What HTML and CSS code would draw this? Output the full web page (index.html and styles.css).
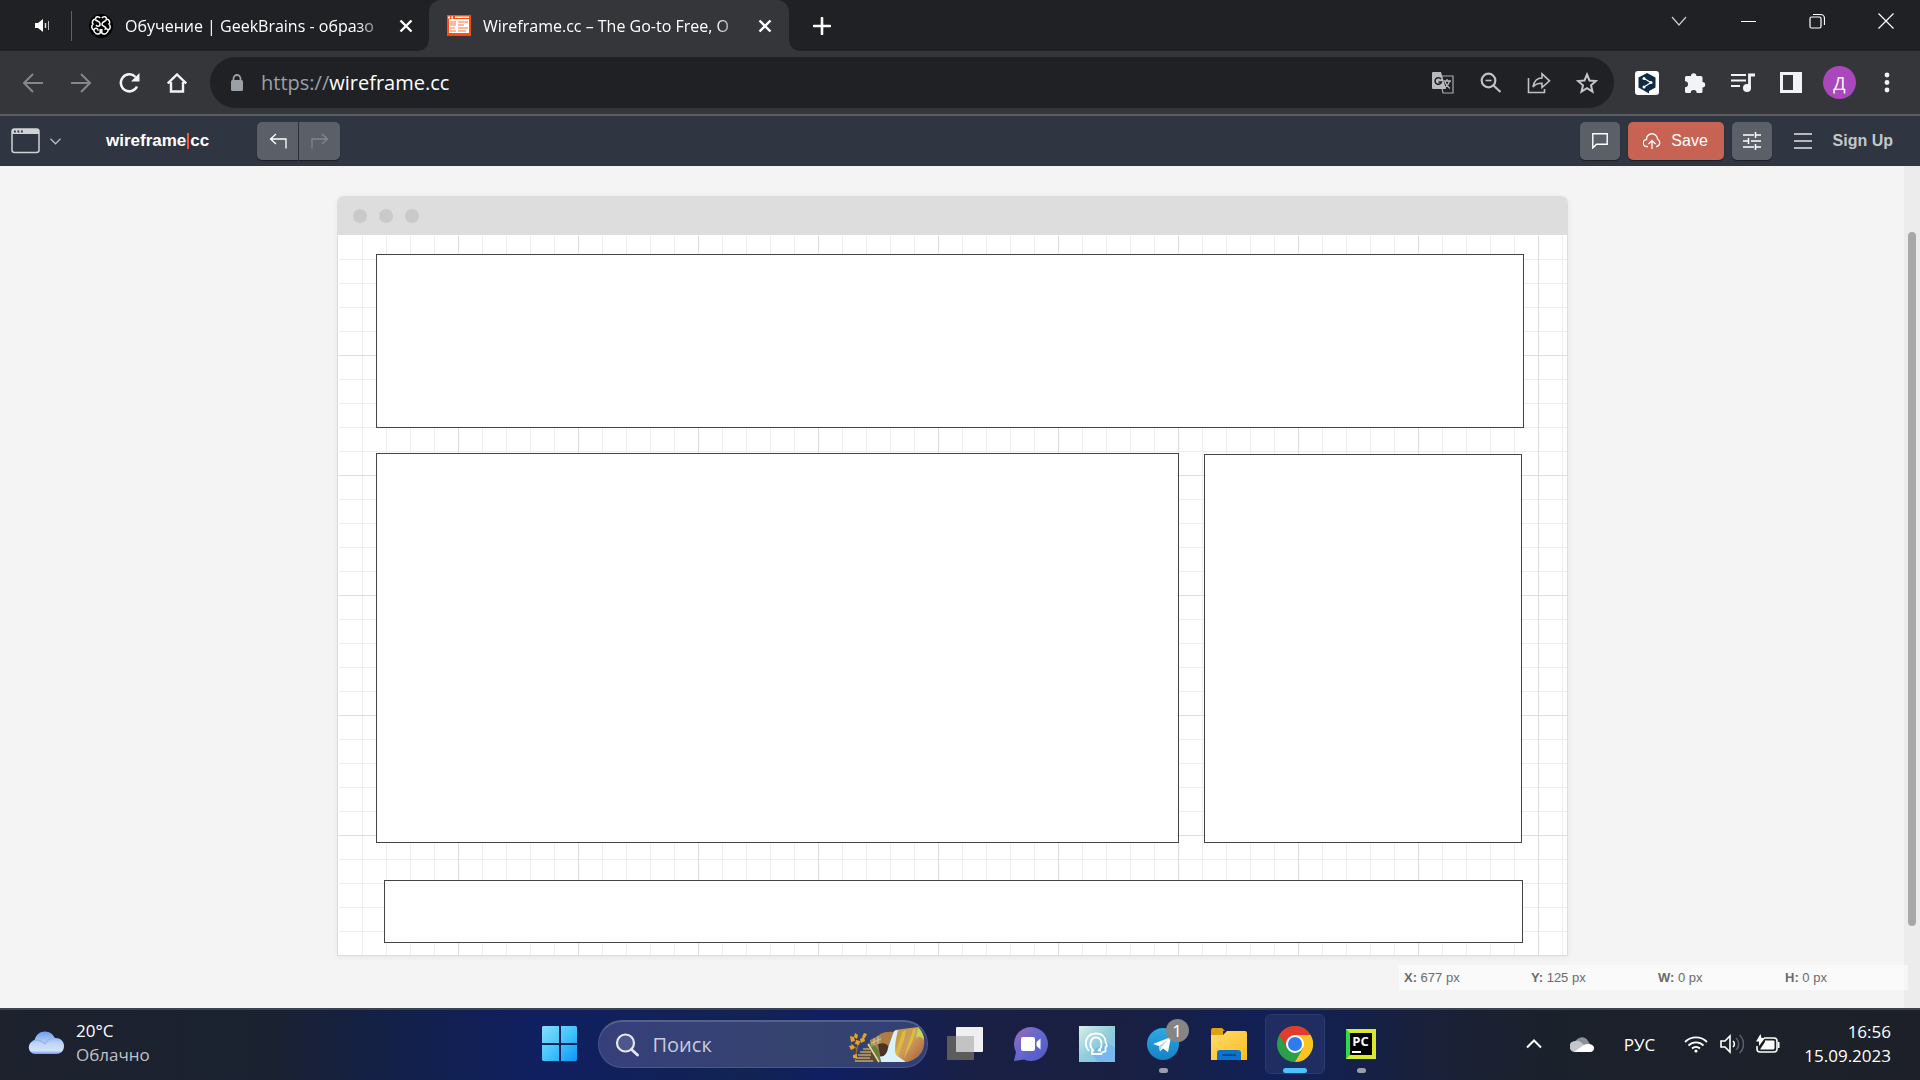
FILE: index.html
```html
<!DOCTYPE html>
<html lang="ru">
<head>
<meta charset="utf-8">
<title>Wireframe.cc – The Go-to Free, O</title>
<meta name="viewport" content="width=device-width, initial-scale=1">
<link rel="stylesheet" href="styles.css">
</head>
<body>
<div class="desktop">
  <header class="tabstrip">
    <button class="tab-sound" type="button" aria-label="Звук">
      <svg width="16" height="16" viewBox="0 0 16 16"><path d="M0 5h3l5-4v13l-5-4H0z" fill="#fff"/><path d="M10.500 5v5" stroke="#ddd" stroke-width="1.500"/><path d="M13.500 3v9" stroke="#bbb" stroke-width="1"/></svg>
    </button>
    <a class="tab" href="#geekbrains">
      <svg width="24" height="24" viewBox="0 0 24 24"><circle cx="12" cy="12" r="12" fill="#000"/><g fill="none" stroke="#fff" stroke-width="1.500"><path d="M11.200 4C9 1.500 6.500 3 6.500 5 3.500 5.500 2.500 8.500 4 10c-2 2-1.500 5 .8 6 0 3 4.200 5.500 6.400 3V15"/><path d="M12.800 4c2.200-2.500 4.700-1 4.700 1 3 .5 4 3.500 2.500 5 2 2 1.500 5-.8 6 0 3-4.200 5.500-6.400 3v-4"/><path d="M6.500 5.500c.5 2 4 1 4.500 4s-2.500 3.500-4 1.500M17.500 5.500c-1 2.500-4 1.500-4.500 4.500s4 1.500 4 4.500M5 16c1-3 4-2 4 .8M19 16c-1-2-2.500-1.500-3.500-.5"/></g></svg>
      <span class="tab-title">Обучение | GeekBrains - образо</span>
      <svg class="tab-close" width="14" height="14" viewBox="0 0 14 14"><path d="M1.500 1.500l11 11M12.500 1.500l-11 11" stroke="#fff" stroke-width="2.400"/></svg>
    </a>
    <a class="tab tab-active" href="#wireframe">
      <svg width="24" height="24" viewBox="0 0 24 24"><rect y="2" width="24" height="20" fill="#777"/><rect y="1" width="24" height="20" fill="#ff4c0a"/><path d="M2 5h20v14H2zM1 2.500h2v2H1zM4 2.500h2v2H4zM8 2.500h14v1.500H8z" fill="#fff"/><path d="M3 7h6v5H3zM11 7h10v2H11zM11 10h6v2h-6zM3 13h5v2H3zM11 13h10v2H11zM3 16h6v2H3zM11 16h8v2h-8z" fill="#ffb899"/></svg>
      <span class="tab-title">Wireframe.cc – The Go-to Free, O</span>
      <svg class="tab-close" width="14" height="14" viewBox="0 0 14 14"><path d="M1.500 1.500l11 11M12.500 1.500l-11 11" stroke="#fff" stroke-width="2.400"/></svg>
    </a>
    <button class="new-tab" type="button" aria-label="Новая вкладка"><svg width="18" height="18" viewBox="0 0 18 18"><path d="M9 1v16M1 9h16" stroke="#fff" stroke-width="2.600" stroke-linecap="round"/></svg></button>
    <div class="window-controls">
      <button type="button" aria-label="Поиск вкладок"><svg width="16" height="16" viewBox="0 0 16 16" fill="none" stroke="#ccc" stroke-width="1.200"><path d="M1 4l7 8 7-8"/></svg></button>
      <button type="button" aria-label="Свернуть"><svg width="16" height="16" viewBox="0 0 16 16"><path d="M1 8.500h15" stroke="#fff"/></svg></button>
      <button type="button" aria-label="Свернуть в окно"><svg width="16" height="16" viewBox="0 0 16 16" fill="none" stroke="#fff" stroke-width="1.200"><rect x="1" y="4" width="11" height="11" rx="1.500"/><path d="M4 1.500h7.500a4 4 0 0 1 4 4V12"/></svg></button>
      <button type="button" aria-label="Закрыть"><svg width="16" height="16" viewBox="0 0 16 16"><path d="M.5.500l15 15M15.500.500l-15 15" stroke="#fff" stroke-width="1.200"/></svg></button>
    </div>
  </header>

  <nav class="toolbar">
    <button class="tool" type="button" aria-label="Назад"><svg width="20" height="20" viewBox="0 0 20 20" fill="none" stroke="#85868a" stroke-width="2"><path d="M20 10H1.500M10 1l-9 9 9 9"/></svg></button>
    <button class="tool" type="button" aria-label="Вперёд"><svg width="20" height="20" viewBox="0 0 20 20" fill="none" stroke="#85868a" stroke-width="2"><path d="M0 10h18.500M10 1l9 9-9 9"/></svg></button>
    <button class="tool" type="button" aria-label="Обновить"><svg width="22" height="22" viewBox="0 0 22 22"><path d="M19 14.500A8.500 8.500 0 1 1 17.500 5" fill="none" stroke="#f1f3f4" stroke-width="2.500"/><path d="M21.500 1v8.500H13z" fill="#f1f3f4"/></svg></button>
    <button class="tool" type="button" aria-label="Главная"><svg width="20" height="20" viewBox="0 0 20 20"><path d="M.8 10.500L10 1.500l9.200 9M4 9v9.500h12V9" fill="none" stroke="#f1f3f4" stroke-width="2.400"/></svg></button>
    <div class="omnibox">
      <svg class="lock" width="12" height="18" viewBox="0 0 12 18"><rect y="6" width="12" height="11" rx="1.500" fill="#9aa0a6"/><path d="M2.500 7V4.500a3.500 3.500 0 0 1 7 0V7" fill="none" stroke="#9aa0a6" stroke-width="1.800"/></svg>
      <a class="url" href="#wireframe"><span class="scheme">https://</span>wireframe.cc</a>
      <button class="tool" type="button" aria-label="Перевести"><svg width="22" height="22" viewBox="0 0 22 22"><path d="M7 4h14v17H11z" fill="none" stroke="#aaabad" stroke-width="1.200"/><path d="M1 0h8l5 17H1a1 1 0 0 1-1-1V1a1 1 0 0 1 1-1z" fill="#b9babc"/><path d="M9 7A3.300 3.300 0 1 0 9.500 10H6.500" fill="none" stroke="#202124" stroke-width="1.500"/><path d="M11.500 9h7.500M15 7v2M17.500 9c-.5 3-2.500 5-4.500 6.500M13 10c1 3 3 5 5 6.500" stroke="#b9babc" stroke-width="1.300" fill="none"/></svg></button>
      <button class="tool" type="button" aria-label="Масштаб"><svg width="22" height="22" viewBox="0 0 22 22" fill="none" stroke="#bdc1c6" stroke-width="2.200"><circle cx="8.500" cy="8.500" r="6.800"/><path d="M13.500 13.500l7 6.500"/><path d="M5.500 8.500h6" stroke-width="1.600"/></svg></button>
      <button class="tool" type="button" aria-label="Поделиться"><svg width="24" height="22" viewBox="0 0 24 22" fill="none" stroke="#bdc1c6" stroke-width="1.600"><path d="M1.500 6v14.500h16V17"/><path d="M6 15c1-6 4-9 9-9V1.800l7.500 7L15 15.500v-4.200c-4 0-7 1-9 3.700z"/></svg></button>
      <button class="tool" type="button" aria-label="Добавить в закладки"><svg width="22" height="22" viewBox="0 0 22 22"><path d="M11 2.500l2.500 6 6.500.5-5 4.300 1.500 6.200-5.500-3.400-5.500 3.400L7 13.300 2 9l6.500-.5z" fill="none" stroke="#c4c7ca" stroke-width="2"/></svg></button>
    </div>
    <div class="extensions">
      <button class="tool" type="button" aria-label="DeepL"><svg width="24" height="24" viewBox="0 0 24 24"><rect width="24" height="24" rx="3" fill="#fff"/><path d="M12 2l8.500 4.500v10L14 20v2.500L3.500 16.500v-10z" fill="#0f2b46"/><path d="M9 7.500l7 4-7 4.500" stroke="#fff" stroke-width="1.200" fill="none"/><g fill="#fff"><circle cx="9" cy="7.500" r="1.500"/><circle cx="16" cy="11.500" r="1.500"/><circle cx="9" cy="16" r="1.500"/></g></svg></button>
      <button class="tool" type="button" aria-label="Расширения"><svg width="22" height="22" viewBox="0 0 22 22"><path d="M2.500 4H7a2.700 2.700 0 1 1 5.400 0H17a1.500 1.500 0 0 1 1.500 1.500V10a2.700 2.700 0 1 1 0 5.400v4.100A1.500 1.500 0 0 1 17 21h-4.300a3 3 0 0 0-6 0H2.500A1.500 1.500 0 0 1 1 19.500v-4.200a3 3 0 0 0 0-6V5.500A1.500 1.500 0 0 1 2.500 4z" fill="#f1f3f4"/></svg></button>
      <button class="tool" type="button" aria-label="Медиа"><svg width="24" height="20" viewBox="0 0 24 20"><path d="M0 2h15M0 7.500h15M0 13h9" stroke="#f1f3f4" stroke-width="2.200"/><circle cx="16" cy="15" r="4" fill="#f1f3f4"/><path d="M18.500 15V2H24" fill="none" stroke="#f1f3f4" stroke-width="2.800"/></svg></button>
      <button class="tool" type="button" aria-label="Боковая панель"><svg width="22" height="21" viewBox="0 0 22 21"><path d="M0 0h22v21H0zM3 3v15h10V3z" fill="#f1f3f4" fill-rule="evenodd"/></svg></button>
      <button class="tool avatar" type="button">Д</button>
      <button class="tool" type="button" aria-label="Меню"><svg width="6" height="22" viewBox="0 0 6 22" fill="#f1f3f4"><circle cx="3" cy="3" r="2.400"/><circle cx="3" cy="10.500" r="2.400"/><circle cx="3" cy="18" r="2.400"/></svg></button>
    </div>
  </nav>

  <div class="appbar">
    <button class="device" type="button" aria-label="Device">
      <svg width="29" height="26" viewBox="0 0 29 26"><rect x="1" y="1" width="27" height="23.500" rx="2.500" fill="none" stroke="#d0d2d6" stroke-width="1.500"/><path d="M1 3a2 2 0 0 1 2-2h23a2 2 0 0 1 2 2v3H1z" fill="#d0d2d6"/><path d="M3 2.500h1.800v2H3zM6.500 2.500h1.800v2H6.500zM10 2.500h1.800v2H10z" fill="#2f3541"/></svg>
      <svg width="11" height="7" viewBox="0 0 11 7"><path d="M.5.800l5 5 5-5" fill="none" stroke="#b9bcc3" stroke-width="1.300"/></svg>
    </button>
    <a class="logo" href="#home">wireframe<span class="logo-bar"></span>cc</a>
    <div class="history">
      <button class="app-btn" type="button" aria-label="Undo"><svg width="18" height="16" viewBox="0 0 18 16" fill="none" stroke="#fff" stroke-width="1.300"><path d="M17 15.500V6H1.500M7 1L1.500 6 7 11"/></svg></button>
      <button class="app-btn" type="button" aria-label="Redo"><svg width="18" height="16" viewBox="0 0 18 16" fill="none" stroke="#858585" stroke-width="1.300"><path d="M1 15.500V6h15.500M11 1l5.500 5-5.500 5"/></svg></button>
    </div>
    <div class="actions">
      <button class="app-btn" type="button" aria-label="Comment"><svg width="16" height="16" viewBox="0 0 16 16"><path d="M.8.800h14.400v10.500H4.500L.8 15z" fill="none" stroke="#fff" stroke-width="1.400"/></svg></button>
      <button class="app-btn save" type="button"><svg width="18" height="16" viewBox="0 0 18 16" fill="none" stroke="#fff" stroke-width="1.300"><path d="M5 13.500H4a3.500 3.500 0 0 1-.5-7A5.500 5.500 0 0 1 14.500 6a4 4 0 0 1-1 7.500H13M9 16V7.500M5.500 11L9 7.500l3.500 3.500"/></svg>Save</button>
      <button class="app-btn" type="button" aria-label="Settings"><svg width="18" height="18" viewBox="0 0 18 18" fill="none" stroke="#fff" stroke-width="1.500"><path d="M0 3h11M13 3h5M12.500 0v6M0 9h5M8 9h10M5.500 6v6M0 15h11M13 15h5M12.500 12v6"/></svg></button>
      <button class="burger" type="button" aria-label="Menu"><svg width="18" height="16" viewBox="0 0 18 16" stroke="#e3e4e6" stroke-width="1.500"><path d="M0 1h18M0 8h18M0 15h18"/></svg></button>
      <a class="signup" href="#signup">Sign Up</a>
    </div>
  </div>

  <main class="workspace">
    <div class="stage">
      <section class="canvas">
        <div class="canvas-bar"><i></i><i></i><i></i></div>
        <div class="canvas-body">
          <div class="box box-header"></div>
          <div class="box box-main"></div>
          <div class="box box-side"></div>
          <div class="box box-footer"></div>
        </div>
      </section>
    </div>
    <div class="scrollbar"><div class="thumb"></div></div>
    <div class="coords"><span><b>X:</b> 677 px</span><span><b>Y:</b> 125 px</span><span><b>W:</b> 0 px</span><span><b>H:</b> 0 px</span></div>
  </main>

  <footer class="taskbar">
    <div class="weather">
      <svg width="36" height="24" viewBox="0 0 36 24"><defs><linearGradient id="cl" x1="0" y1="0" x2="0" y2="1"><stop offset="0" stop-color="#6f9cec"/><stop offset=".55" stop-color="#c3d6f8"/><stop offset=".85" stop-color="#d3e1fb"/><stop offset="1" stop-color="#6c9bee"/></linearGradient></defs><path d="M7 23a6.800 6.800 0 0 1-.5-13.500C8 3.500 12 .5 17 .5c5 0 8.500 3 9.500 6.500C32 6.500 36 10 36 15c0 5-3.500 8-7.500 8z" fill="url(#cl)"/><path d="M5 10c5-2 9 0 12 3M17 13c2-4 5-6 10-6" fill="none" stroke="#8fb1f0" stroke-width="1.200"/></svg>
      <div class="weather-text"><span>20°C</span><span class="dim">Облачно</span></div>
    </div>
    <div class="apps">
      <button class="app" type="button" aria-label="Пуск"><svg width="36" height="36" viewBox="0 0 36 36"><defs><linearGradient id="wn" x1="0" y1="0" x2="1" y2="1"><stop offset="0" stop-color="#86dcfd"/><stop offset=".45" stop-color="#4cc8fb"/><stop offset="1" stop-color="#0a97fb"/></linearGradient></defs><path d="M1 0h16v17H0V1zM19 0h15l1 1v16H19zM0 19h17v16H1l-1-1zM19 19h16v15l-1 1H19z" fill="url(#wn)"/></svg></button>
      <label class="search">
        <svg width="24" height="24" viewBox="0 0 24 24" fill="none" stroke="#e6e8f0"><circle cx="10.500" cy="10" r="8.500" stroke-width="2.200" fill="#4d578b"/><path d="M16.500 16.500l6 5.500" stroke-width="2.800" stroke-linecap="round"/></svg>
        <input type="text" placeholder="Поиск" aria-label="Поиск">
        <svg class="search-art" width="76" height="36" viewBox="0 0 76 36"><defs><linearGradient id="rk" x1="0" y1="0" x2="1" y2="1"><stop offset="0" stop-color="#b9a03c"/><stop offset=".5" stop-color="#d09a5c"/><stop offset="1" stop-color="#a05a3c"/></linearGradient></defs><path d="M22 16C27 9 33 4 44 5l6 8-6 20H24z" fill="#b07c45"/><path d="M29 17c8-3 14 2 15 17H32z" fill="#4c3323"/><path d="M46 3L69 0c5 5 7 12 6 18-1 9-8 15-17 17l-14-4z" fill="url(#rk)"/><path d="M53 5c-1 8-5 12-7 24l3 1c3-11 7-16 8-27zM64 2c-3 12-6 16-9 29 5-9 10-17 12-30z" fill="#d9bb45"/><path d="M69 0c4 4 6 9 6 13-3-4-6-4-8-2z" fill="#c2d857"/><path d="M45 4l4-1c-2 8-4 18-2 25l10 7H32l-3-6c6 2 9-2 10-8z" fill="#d8f2fb"/><path d="M16 25l5-10 8 7 3 12H8z" fill="#66803a"/><path d="M5 35l14-17 12 17z" fill="#5c4932"/><path d="M7 31h14M9 28h13M11 25h11M14 22h7M6 34h18" stroke="#e4cf9b" stroke-width="1.200"/><path d="M19 17l11 18" stroke="#e7d4a4" stroke-width="1.600"/><path d="M21 13l11-5v8l-10 4z" fill="#a88f60"/><path d="M22 16l10-4M25 11v7M29 9v8" stroke="#d6c08c"/><path d="M6 33l3-17M8 22l-6-5M9 18l5-8" stroke="#a8661c" stroke-width="1.300"/><path d="M1 9l4 1 1 4-4 1zM6 6l3 2-1 4-3-2zM0 19l4-1 2 3-4 2zM11 12l4-2 1 4-4 2zM15 6l3 1-2 4-3-1zM7 13l4 1-1 4-4-1zM4 28l4-1v4H4z" fill="#e2a32b"/></svg>
      </label>
      <button class="app" type="button" aria-label="Представление задач"><svg width="36" height="36" viewBox="0 0 36 36"><rect y="10" width="27" height="24" rx="1" fill="#5c5c5c"/><rect x="9" y="1" width="27" height="25" rx="1" fill="#efefef"/><path d="M9 10h18v16H9z" fill="#c3c3c5"/></svg></button>
      <button class="app" type="button" aria-label="Чат"><svg width="36" height="36" viewBox="0 0 36 36"><defs><linearGradient id="ct" x1="0" y1="0" x2="1" y2="1"><stop offset="0" stop-color="#9a6bb5"/><stop offset=".5" stop-color="#6467cf"/><stop offset="1" stop-color="#5058c4"/></linearGradient></defs><path d="M18 1a17 17 0 1 1-7 32.500L1 35l2-9A17 17 0 0 1 18 1z" fill="url(#ct)"/><rect x="8" y="11" width="14" height="14" rx="2" fill="#fff"/><path d="M23.500 16l4-3.500v11l-4-3.500z" fill="#fff"/></svg></button>
      <button class="app" type="button" aria-label="Ассистент"><svg width="36" height="36" viewBox="0 0 36 36"><defs><linearGradient id="ai" x1="0" y1="0" x2="1" y2="1"><stop offset="0" stop-color="#dceeea"/><stop offset=".5" stop-color="#90cddb"/><stop offset="1" stop-color="#7cc1f2"/></linearGradient></defs><rect width="36" height="36" fill="url(#ai)"/><path d="M11 26l8 10h17V22l-9-6z" fill="#78b8ee"/><g fill="none" stroke="#fff" stroke-width="1.800" stroke-linejoin="round"><path d="M10 25C4 18 7 7.500 17 7.500c7 0 9.500 4.500 9.500 8.500l1.500 4-1.500 1v4.500l-4 1"/><path d="M22.500 26.500v1.500H13v-3.500h1.500c-5-4-3.500-13 2.500-13s7.500 9 2.500 13H22"/></g></svg></button>
      <button class="app running" type="button" aria-label="Telegram"><svg width="34" height="34" viewBox="0 0 34 34"><defs><linearGradient id="tg" x1="0" y1="0" x2="0" y2="1"><stop offset="0" stop-color="#2fa9e4"/><stop offset="1" stop-color="#1482c4"/></linearGradient></defs><circle cx="17" cy="17" r="16" fill="url(#tg)"/><path d="M7 17L25 10l-3 15-5-3.500-3 3-1-5.500z" fill="#fff"/><path d="M13 19l9-6-6.500 7-1.500 4.500z" fill="#b5d5ea"/></svg><span class="badge">1</span></button>
      <button class="app" type="button" aria-label="Проводник"><svg width="36" height="36" viewBox="0 0 36 36"><defs><linearGradient id="fd" x1="0" y1="0" x2="1" y2="1"><stop offset="0" stop-color="#ffdc70"/><stop offset="1" stop-color="#fbbc1c"/></linearGradient></defs><path d="M0 4a2 2 0 0 1 2-2h9l3 3h-2v6H0z" fill="#e0a010"/><path d="M0 9h12l4-4h18a2 2 0 0 1 2 2v27H0z" fill="url(#fd)"/><path d="M6 34V27a3 3 0 0 1 3-3h18a3 3 0 0 1 3 3v7z" fill="#0b74cd"/><path d="M11 29h14" stroke="#084a8c" stroke-width="1.800"/></svg></button>
      <button class="app current" type="button" aria-label="Chrome"><svg width="36" height="36" viewBox="0 0 36 36"><circle cx="18" cy="18" r="18" fill="#2c9f4b"/><path d="M18 18L2.400 9A18 18 0 0 1 33.600 9z" fill="#e33b2e"/><path d="M18 9h15.600A18 18 0 0 1 18 36l8-13.500z" fill="#fcc31e"/><path d="M2.400 9l8 13.500L18 9z" fill="#e33b2e"/><circle cx="18" cy="18" r="9" fill="#fff"/><circle cx="18" cy="18" r="7" fill="#2f7bed"/></svg></button>
      <button class="app running" type="button"><span class="pycharm">PC</span></button>
    </div>
    <div class="tray">
      <button class="tray-chevron" type="button" aria-label="Скрытые значки"><svg width="16" height="10" viewBox="0 0 16 10"><path d="M1 8.500l7-7 7 7" fill="none" stroke="#fff" stroke-width="2"/></svg></button>
      <svg class="onedrive" width="24" height="16" viewBox="0 0 24 16"><path d="M5 7A7 7 0 0 1 18 5l2 3-8 3z" fill="#8c8f94"/><path d="M5 16A5.500 5.500 0 0 1 5 5c3-1 6 1 8 3l4 4z" fill="#c5c6c9"/><path d="M4 16l10-7c3-2 10-1 10 3 0 2-1 4-4 4z" fill="#fff"/></svg>
      <button class="lang" type="button">РУС</button>
      <div class="status">
        <svg width="24" height="18" viewBox="0 0 24 18" fill="none" stroke="#fff" stroke-width="1.800"><path d="M1 7a15.500 15.500 0 0 1 22 0M4.500 10.500a10.500 10.500 0 0 1 15 0M8 13.500a6 6 0 0 1 8 0"/><circle cx="12" cy="16" r="1.600" fill="#fff" stroke="none"/></svg>
        <svg width="24" height="20" viewBox="0 0 24 20" fill="none" stroke-width="1.600"><path d="M1 7h4l5-5v16l-5-5H1zM13 7a4 4 0 0 1 0 6" stroke="#fff"/><path d="M16 4a8 8 0 0 1 0 12M19.500 1a12 12 0 0 1 0 18" stroke="#5a5f69"/></svg>
        <svg width="24" height="20" viewBox="0 0 24 20"><path d="M8 4h10a3 3 0 0 1 3 3v8a3 3 0 0 1-3 3H4a3 3 0 0 1-3-3v-3" fill="none" stroke="#fff" stroke-width="1.600"/><path d="M9 6.500h8.500a1 1 0 0 1 1 1V14a1.500 1.500 0 0 1-1.500 1.500H4L9 8zM22 8h1.500v6H22zM4.500 0L0 7.500h3V12l6-8H5.500z" fill="#fff"/></svg>
      </div>
      <div class="clock"><span>16:56</span><span>15.09.2023</span></div>
    </div>
  </footer>
</div>
</body>
</html>
```
FILE: styles.css
```css
* { box-sizing: border-box; }

body {
  margin: 0;
  font-family: "Open Sans", "Noto Sans", sans-serif;
  font-size: 16px;
  color: #fff;
}

button {
  display: flex;
  align-items: center;
  justify-content: center;
  padding: 0;
  border: 0;
  background: none;
  color: inherit;
  font: inherit;
}

a { color: inherit; text-decoration: none; }
svg { display: block; flex: none; }

.desktop {
  display: flex;
  flex-direction: column;
  min-height: 100vh;
}

/* Browser tabs */
.tabstrip {
  display: flex;
  height: 51px;
  background: #202124;
}

.tab-sound {
  width: 72px;
  position: relative;
  padding-left: 14px;
}

.tab-sound::after {
  content: "";
  position: absolute;
  right: 0;
  top: 11px;
  width: 1px;
  height: 30px;
  background: #5f6063;
}

.tab {
  display: flex;
  align-items: center;
  flex: 0 1 360px;
  min-width: 0;
  padding: 0 17px 0 18px;
}

.tab:first-of-type {
  flex-basis: 357px;
  padding: 0 16px 0 17px;
}

.tab-active {
  position: relative;
  border-radius: 12px 12px 0 0;
  background: #35363a;
}

.tab-active::before,
.tab-active::after {
  content: "";
  position: absolute;
  bottom: 0;
  width: 10px;
  height: 10px;
}

.tab-active::before {
  right: 100%;
  background: radial-gradient(circle at 0 0, transparent 9px, #35363a 10px);
}

.tab-active::after {
  left: 100%;
  background: radial-gradient(circle at 100% 0, transparent 9px, #35363a 10px);
}

.tab-title {
  flex: 1;
  min-width: 0;
  margin: 0 10px 0 12px;
  white-space: nowrap;
  mask-image: linear-gradient(to right, #000 calc(100% - 32px), transparent);
}

.new-tab { width: 66px; }

.window-controls {
  display: flex;
  height: 42px;
  margin-left: auto;
}

.window-controls button { width: 69px; }

/* Address bar */
.toolbar {
  display: flex;
  align-items: center;
  height: 65px;
  padding: 0 9px;
  border-bottom: 2px solid #5b5f61;
  background: #35363a;
}

.tool {
  flex: none;
  width: 48px;
  height: 48px;
}

.omnibox {
  display: flex;
  flex: 1;
  align-items: center;
  min-width: 0;
  height: 51px;
  margin-left: 9px;
  padding: 0 3px 0 21px;
  border-radius: 26px;
  background: #202124;
}

.url {
  flex: 1;
  min-width: 0;
  margin-left: 18px;
  font-size: 20px;
}

.scheme { color: #9aa0a6; }

.extensions {
  display: flex;
  align-items: center;
  margin-left: 9px;
}

.avatar {
  width: 33px;
  height: 33px;
  margin: 0 7px 0 8px;
  border-radius: 50%;
  background: #ab47bc;
  font-size: 18px;
}

/* Application bar */
.appbar {
  display: flex;
  align-items: center;
  height: 50px;
  padding: 0 27px 0 11px;
  background: #2f3541;
  font-family: "Liberation Sans", Arial, sans-serif;
}

.device { gap: 10px; }

.logo {
  display: flex;
  align-items: center;
  margin-left: 45px;
  font-size: 17px;
  font-weight: 700;
}

.logo-bar {
  width: 2px;
  height: 16px;
  margin: 0 1px;
  background: #ee5a3f;
}

.history {
  display: flex;
  gap: 1px;
  margin-left: 48px;
}

.app-btn {
  width: 41px;
  height: 38px;
  border-radius: 5px;
  background: #5b5f68;
  box-shadow: 0 1px 1px #1b1e24;
  font-family: "Liberation Sans", Arial, sans-serif;
}

.history .app-btn:first-child { border-radius: 5px 0 0 5px; }
.history .app-btn:last-child { border-radius: 0 5px 5px 0; }

.actions {
  display: flex;
  align-items: center;
  gap: 8px;
  margin-left: auto;
}

.actions .app-btn { width: 40px; }

.actions .save {
  gap: 10px;
  width: 96px;
  background: #c76352;
}

.burger { margin: 0 13px 0 14px; }

.signup {
  color: #c5c6c8;
  font-weight: 700;
}

/* Drawing area */
.workspace {
  position: relative;
  display: flex;
  flex: 1;
  background: #f4f4f4;
}

.stage {
  display: flex;
  flex: 1;
  justify-content: center;
  min-width: 0;
  padding: 30px 16px 52px 17px;
}

.canvas {
  display: flex;
  flex-direction: column;
  width: 100%;
  max-width: 1231px;
  border-radius: 7px 7px 0 0;
  box-shadow: 0 1px 5px #e6e6e6;
  overflow: hidden;
}

.canvas-bar {
  display: flex;
  align-items: center;
  gap: 12px;
  height: 39px;
  padding: 0 16px;
  background: #ddd;
}

.canvas-bar i {
  width: 14px;
  height: 14px;
  border-radius: 50%;
  background: #c9c9c9;
}

.canvas-body {
  position: relative;
  flex: 1;
  min-height: 720px;
  border: 1px solid #ddd;
  border-top: 0;
  background-color: #fff;
  background-image:
    linear-gradient(to right, #ddd 1px, transparent 1px),
    linear-gradient(to bottom, #ddd 1px, transparent 1px),
    linear-gradient(to right, #ededed 1px, transparent 1px),
    linear-gradient(to bottom, #ededed 1px, transparent 1px);
  background-size: 120px 120px, 120px 120px, 24px 24px, 24px 24px;
  background-position: 120px 120px, 120px 120px, 24px 24px, 24px 24px;
}

/* Covers the grid lines that fall on the canvas edge */
.canvas-body::before {
  content: "";
  position: absolute;
  inset: 0;
  border-top: 1px solid #fff;
  border-left: 1px solid #fff;
}

.box {
  position: absolute;
  border: 1px solid #444;
  background: #fff;
}

.box-header { left: 38px; top: 19px; width: 1148px; height: 174px; }
.box-main { left: 38px; top: 218px; width: 803px; height: 390px; }
.box-side { left: 866px; top: 219px; width: 318px; height: 389px; }
.box-footer { left: 46px; top: 645px; width: 1139px; height: 63px; }

.scrollbar {
  display: grid;
  grid-template-rows: 66fr 694fr 82fr;
  width: 16px;
  padding: 0 4px;
  background: #ececec;
}

.thumb {
  grid-row: 2;
  border-radius: 4px;
  background: #a8a8a8;
}

.coords {
  position: absolute;
  right: 12px;
  bottom: 18px;
  display: grid;
  grid-template-columns: repeat(3, 127px) 123px;
  padding-left: 5px;
  background: rgba(255, 255, 255, .5);
  color: #6b6b6b;
  font: 13px/25px "Liberation Sans", Arial, sans-serif;
}

/* Taskbar */
.taskbar {
  display: grid;
  grid-template-columns: 1fr auto 1fr;
  height: 72px;
  padding-bottom: 2px;
  border-top: 2px solid #3c424e;
  background: linear-gradient(to right, #1d222d, #1a2130 14%, #12204a 21%, #101f60 28%, #122353 39%, #101f62 43%, #192044 51%, #191f40 58%, #102058 67%, #19203a 74%, #1b212c 80%, #1d2028);
  font-size: 17px;
}

.weather {
  display: flex;
  align-items: center;
  gap: 12px;
  padding: 0 0 2px 28px;
}

.weather-text,
.clock {
  display: flex;
  flex-direction: column;
  line-height: 24px;
}

.dim { color: #bfc1c6; }

.apps { display: flex; align-items: center; }

.app {
  position: relative;
  width: 66px;
  height: 60px;
}

.search {
  display: flex;
  align-items: center;
  width: 330px;
  height: 48px;
  margin: 0 4px 0 5px;
  padding: 0 2px 0 16px;
  border: 1px solid #4b5687;
  border-top: 2px solid #56608c;
  border-radius: 24px;
  background: linear-gradient(to right, #363f7b, #35436f 60%, #323f75);
}

.search input {
  flex: 1;
  min-width: 0;
  margin-left: 14px;
  padding: 0;
  border: 0;
  outline: 0;
  background: none;
  color: #fff;
  font: 20px/28px "Open Sans", "Noto Sans", sans-serif;
}

.search input::placeholder { color: #c9cbdb; }

.badge {
  position: absolute;
  left: 36px;
  top: 5px;
  width: 23px;
  height: 23px;
  border-radius: 50%;
  background: #858585;
  line-height: 23px;
}

.running::after,
.current::after {
  content: "";
  position: absolute;
  bottom: 1px;
  left: 29px;
  width: 9px;
  height: 5px;
  border-radius: 3px;
  background: #9a9dab;
}

.current {
  width: 60px;
  margin: 0 3px;
  border: 1px solid #2d3a6b;
  border-radius: 6px;
  background: #202d60;
}

.current::after {
  bottom: 0;
  left: 17px;
  width: 24px;
  background: #4cc2ff;
}

.pycharm {
  width: 30px;
  height: 30px;
  position: relative;
  border: 4px solid #d9e82a;
  border-left-color: #2fd84c;
  background: #000;
  font: 700 13px/16px "Open Sans", sans-serif;
}

.pycharm::after {
  content: "";
  position: absolute;
  left: 2px;
  bottom: 2px;
  width: 9px;
  height: 2px;
  background: #fff;
}

.tray {
  display: flex;
  align-items: center;
  justify-content: flex-end;
  padding-right: 29px;
}

.onedrive { margin-left: 28px; }
.lang { margin-left: 30px; }

.status {
  display: flex;
  align-items: center;
  gap: 12px;
  margin: 0 24px 0 29px;
}

.clock { text-align: right; }
```
